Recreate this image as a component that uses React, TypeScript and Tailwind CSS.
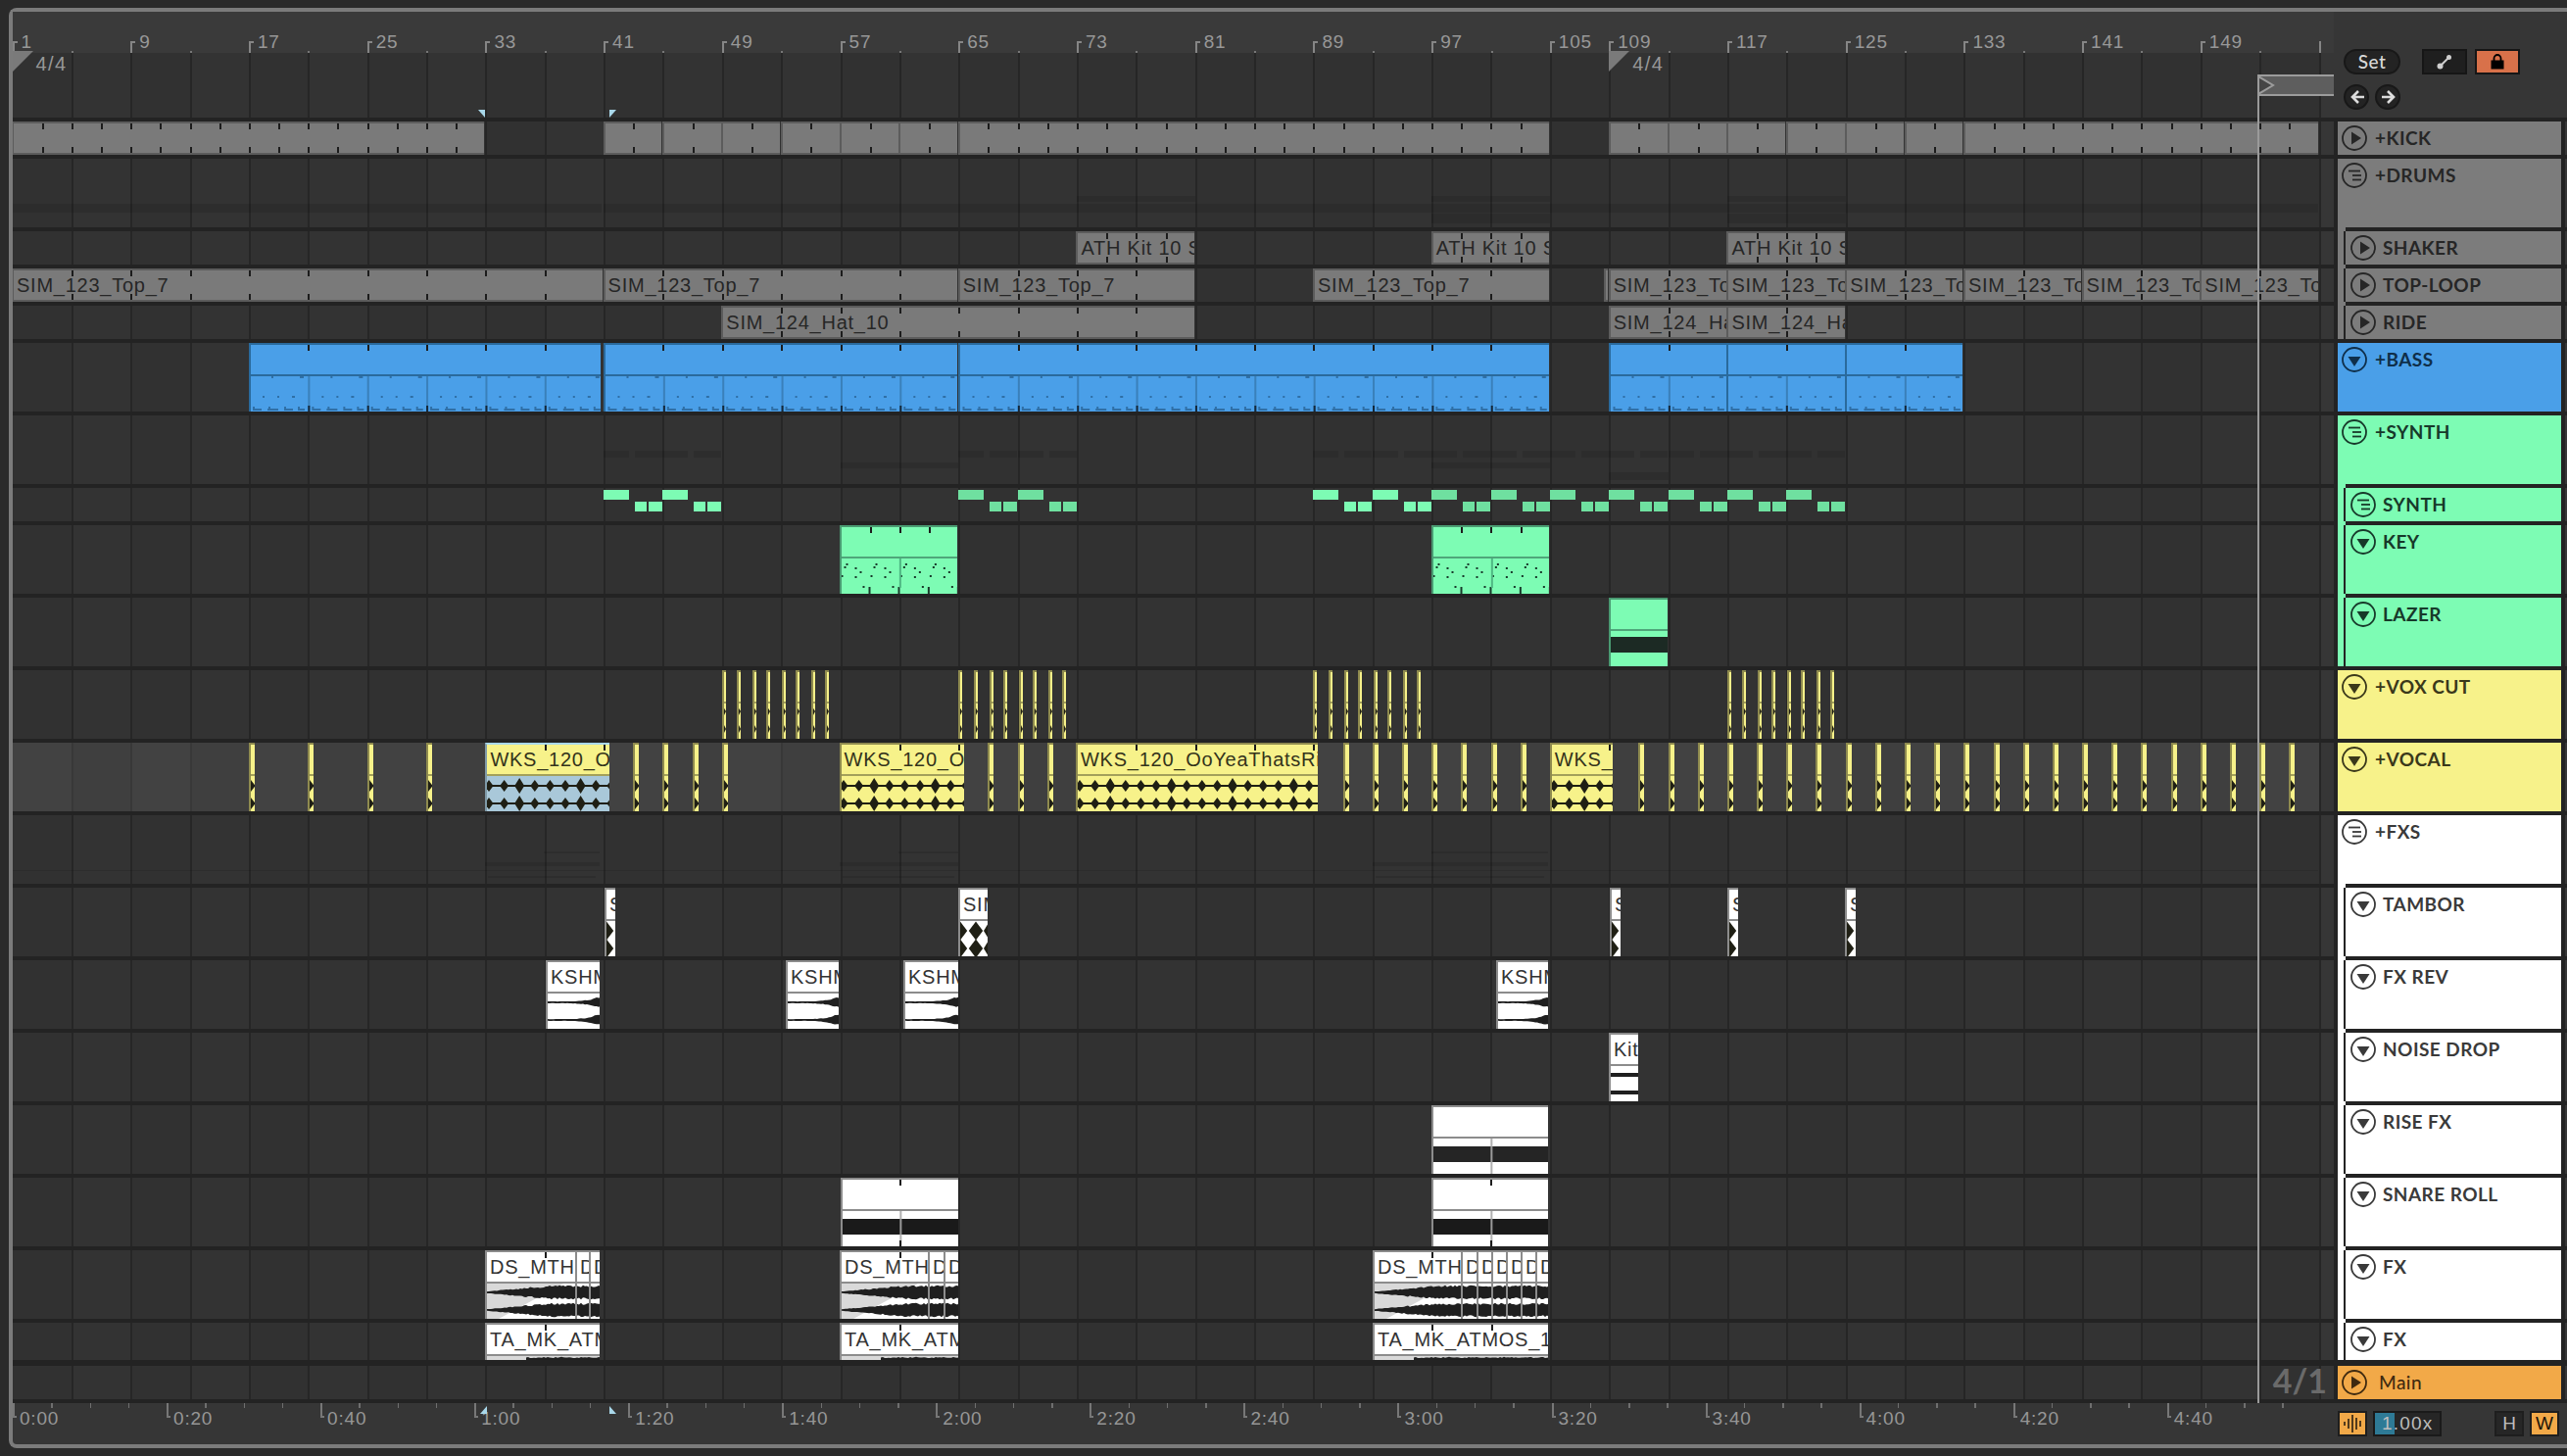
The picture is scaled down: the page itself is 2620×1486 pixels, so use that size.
import React from "react";

const b = (bar: number) => 12.5 + (bar - 1) * 15.09;
const LX = 13;
const P4 = 15.09 * 4;

type ThemeKey = "gray" | "blue" | "green" | "yellow" | "white" | "orange";
const T: Record<ThemeKey, { bg: string; border: string; line: string; text: string; head: string; headText: string; stripe: string }> = {
  gray: { bg: "bg-[#7a7a7a]", border: "border-[#5c5c5c]", line: "bg-[#5c5c5c]", text: "text-[#262626]", head: "bg-[#7c7c7c]", headText: "text-[#262626]", stripe: "bg-[#7c7c7c]" },
  blue: { bg: "bg-[#4a9fe8]", border: "border-[#2a6a9c]", line: "bg-[#2a6a9c]", text: "text-[#10304a]", head: "bg-[#4a9fe8]", headText: "text-[#0f2f4a]", stripe: "bg-[#4a9fe8]" },
  green: { bg: "bg-[#7dfcb4]", border: "border-[#4a9a72]", line: "bg-[#4fa67a]", text: "text-[#123a2a]", head: "bg-[#7dfcb4]", headText: "text-[#17392a]", stripe: "bg-[#7dfcb4]" },
  yellow: { bg: "bg-[#f7f28a]", border: "border-[#8f8b4f]", line: "bg-[#a3a05a]", text: "text-[#33331a]", head: "bg-[#f7f28a]", headText: "text-[#3a381a]", stripe: "bg-[#f7f28a]" },
  white: { bg: "bg-white", border: "border-[#8c8c8c]", line: "bg-[#8c8c8c]", text: "text-[#333333]", head: "bg-white", headText: "text-[#3a3a3a]", stripe: "bg-white" },
  orange: { bg: "bg-[#f2a948]", border: "border-[#8c6a30]", line: "bg-[#8c6a30]", text: "text-[#3f2a10]", head: "bg-[#f2a948]", headText: "text-[#3f2a10]", stripe: "bg-[#f2a948]" },
};

type ClipDef = {
  x1: number;
  x2: number;
  t?: string;
  kind?: string;
  tick?: number;
  tickB?: boolean;
  sel?: boolean;
};

const noise = (x: number, s = 0) => Math.abs(Math.sin(x * 12.9898 + s) * 43758.5453) % 1;

function wavePoints(w: number, cy: number, env: (x: number) => number, seed: number) {
  const top: string[] = [];
  const bot: string[] = [];
  for (let x = 0; x <= w + 2; x += 2) {
    const e = env(x);
    const n = 0.75 + 0.3 * noise(x, seed);
    top.push(`${x},${(cy - e * n).toFixed(1)}`);
    bot.unshift(`${x},${(cy + e * (0.75 + 0.3 * noise(x, seed + 3))).toFixed(1)}`);
  }
  return [...top, ...bot].join(" ");
}

function Diamonds({ w, cy, start = 2, pitch = 15.6, scale = 1, line = true }: { w: number; cy: number; start?: number; pitch?: number; scale?: number; line?: boolean }) {
  const out: React.ReactNode[] = [];
  for (let i = 0, x = start; x < w + 8 * scale; i++, x += pitch) {
    const rx = (i % 4 === 2 ? 5 : 4.5) * scale;
    const ry = (i % 4 === 2 ? 8 : 6) * scale;
    out.push(<polygon key={i} points={`${x - rx},${cy} ${x},${cy - ry} ${x + rx},${cy} ${x},${cy + ry}`} fill="#1f1f14" />);
  }
  return (
    <>
      {line && <rect x={0} y={cy - 1} width={w} height={2} fill="#1f1f14" />}
      {out}
    </>
  );
}

function Content({ c }: { c: ClipDef }) {
  const w = c.x2 - c.x1;
  const cells: number[] = [];
  for (let bar = 1; bar <= 157; bar += 4) {
    const s = b(bar) - c.x1 - 2;
    if (s > -P4 && s < w) cells.push(s);
  }
  switch (c.kind) {
    case "midi":
      return (
        <svg width={w} height={36} className="absolute inset-0">
          {cells.map((s, i) => (
            <g key={i} fill="#2f6fa6">
              <rect x={s + 23} y={0} width={2} height={2} />
              <rect x={s + 52} y={0} width={4} height={2} />
              <rect x={s + 14} y={20} width={2} height={2} />
              <rect x={s + 29} y={20} width={2} height={2} />
              <rect x={s + 44} y={20} width={3} height={2} />
              <rect x={s + 4} y={33} width={9} height={2} />
              <rect x={s + 4} y={31} width={2} height={2} />
              <rect x={s + 19} y={33} width={11} height={2} />
              <rect x={s + 20} y={31} width={2} height={2} />
              <rect x={s + 36} y={33} width={9} height={2} />
              <rect x={s + 36} y={31} width={2} height={2} />
              <rect x={s + 50} y={33} width={7} height={2} />
              <rect x={s + 50} y={31} width={2} height={2} />
              {s > 1 && <rect x={s} y={0} width={2} height={36} fill="#3a80ba" />}
              {s > 1 && <rect x={s} y={30} width={2} height={6} fill="#14283a" />}
            </g>
          ))}
        </svg>
      );
    case "key":
      return (
        <svg width={w} height={36} className="absolute inset-0">
          {cells.map((s, i) => (
            <g key={i} fill="#183a2a">
              {[0, 30].map((g) => (
                <g key={g}>
                  <rect x={s + g + 6} y={5} width={2} height={2} />
                  <rect x={s + g + 4} y={8} width={2} height={2} />
                  <rect x={s + g + 1} y={17} width={2} height={2} />
                  <rect x={s + g + 15} y={9} width={2} height={2} />
                  <rect x={s + g + 20} y={13} width={2} height={2} />
                  <rect x={s + g + 15} y={18} width={2} height={2} />
                </g>
              ))}
              <rect x={s + 23} y={28} width={2} height={2} />
              <rect x={s + 53} y={28} width={2} height={2} />
              {s > 1 && <rect x={s} y={0} width={2} height={30} fill="#4fb884" />}
              <rect x={s + 29} y={29} width={2} height={7} />
              <rect x={s + 59} y={29} width={2} height={7} />
            </g>
          ))}
        </svg>
      );
    case "dia":
      return (
        <svg width={w} height={36} className="absolute inset-0">
          <Diamonds w={w} cy={10} start={w < 10 ? 0 : 2} />
          <Diamonds w={w} cy={28} start={w < 10 ? 0 : 2} />
        </svg>
      );
    case "vox":
      return (
        <svg width={w} height={36} className="absolute inset-0">
          <polygon points="-1,3 2,8 -1,14" fill="#1f1f14" />
          <polygon points="-1,20 2,26 -1,32" fill="#1f1f14" />
        </svg>
      );
    case "tamb":
      return (
        <svg width={w} height={36} className="absolute inset-0">
          <Diamonds w={w} cy={10} start={0} pitch={16} scale={1.6} line={false} />
          <Diamonds w={w} cy={28} start={0} pitch={16} scale={1.6} line={false} />
        </svg>
      );
    case "kshm": {
      const env = (x: number) => 1 + 4 * Math.pow(Math.min(1, x / (w - 6)), 5);
      return (
        <svg width={w} height={36} className="absolute inset-0">
          <polygon points={wavePoints(w, 9, env, 1)} fill="#1f1f1f" />
          <polygon points={wavePoints(w, 27, env, 2)} fill="#1f1f1f" />
        </svg>
      );
    }
    case "kit":
      return (
        <svg width={w} height={36} className="absolute inset-0">
          <rect x={0} y={7} width={w} height={4} fill="#1f1f1f" />
          <rect x={0} y={25} width={w} height={4} fill="#1f1f1f" />
        </svg>
      );
    case "rise":
    case "snare":
      return (
        <svg width={w} height={36} className="absolute inset-0">
          <rect x={0} y={8} width={w} height={16} fill={c.kind === "rise" ? "#252525" : "#1a1a1a"} />
          {cells.map((s, i) => (s > 1 ? <rect key={i} x={s} y={0} width={2} height={36} fill="#a8a8a8" opacity={0.9} /> : null))}
        </svg>
      );
    case "lazer":
      return (
        <svg width={w} height={36} className="absolute inset-0">
          <rect x={0} y={6} width={w} height={16} fill="#1c2a24" />
        </svg>
      );
    case "ds":
    case "ds2": {
      const ramp = c.kind === "ds";
      const env = (x: number) => (ramp ? 1 + 6 * Math.min(1, x / 64) : 7);
      return (
        <svg width={w} height={36} className="absolute inset-0">
          {ramp && <polygon points="0,0 78,0 12,36 0,36" fill="#d9d9d9" />}
          <polygon points={wavePoints(w, 9, env, 4 + c.x1)} fill="#1f1f1f" />
          <polygon points={wavePoints(w, 27, env, 7 + c.x1)} fill="#1f1f1f" />
        </svg>
      );
    }
    case "ta":
      return (
        <svg width={w} height={4} className="absolute inset-0">
          <rect x={0} y={0} width={w} height={4} fill="#d9d9d9" />
          <polygon points={wavePoints(w, 5, (x) => (x < 40 ? 0 : 4), 9)} fill="#1f1f1f" />
          <rect x={0} y={0} width={40} height={4} fill="#d9d9d9" />
        </svg>
      );
    default:
      return null;
  }
}

function Clip({ c, th, short }: { c: ClipDef; th: ThemeKey; short: boolean }) {
  const t = T[th];
  const ticks: number[] = [];
  if (c.tick) {
    for (let bar = 1; bar <= 160; bar += c.tick) {
      const x = b(bar);
      if (x > c.x1 + 3 && x < c.x2 - 3) ticks.push(x - c.x1 - 2);
    }
  }
  return (
    <div
      className={`absolute inset-y-0 flex flex-col overflow-hidden border-l-2 border-t-2 ${t.bg} ${c.sel ? "border-t-[#a9d8ea] border-l-[#7f9aa8]" : t.border}`}
      style={{ left: c.x1 - LX, width: c.x2 - c.x1 }}
    >
      <div className={`h-[30px] shrink-0 overflow-hidden whitespace-nowrap pl-[3px] text-[20px] leading-[30px] tracking-[0.75px] ${t.text}`}>{c.t ?? ""}</div>
      <div className={`h-[2px] shrink-0 ${t.line}`} />
      {!short && (
        <div className={`relative flex-1 overflow-hidden ${c.sel ? "bg-[#a9c8d9]" : ""}`}>
          <Content c={c} />
        </div>
      )}
      {ticks.map((x, i) => (
        <React.Fragment key={i}>
          <span className="absolute top-0 h-[6px] w-[2px] bg-[#1c1c1c]" style={{ left: x }} />
          {c.tickB && <span className={`absolute h-[6px] w-[2px] bg-[#1c1c1c] ${short ? "bottom-[2px]" : "bottom-0"}`} style={{ left: x }} />}
        </React.Fragment>
      ))}
    </div>
  );
}

function Grid({ vocal, end = 2 }: { vocal?: boolean; end?: number }) {
  const cells = Array.from({ length: 39 }, (_, i) => i);
  return (
    <div className="absolute inset-0 ml-[-0.5px] flex">
      {cells.map((i) => (
        <div
          key={i}
          className={`h-full w-[60.36px] shrink-0 ${i === 0 ? "" : "border-l-2"} ${vocal ? "border-[#383838]" : "border-[#262626]"} ${
            vocal ? (i % 2 ? "bg-[#3f3f3f]" : "bg-[#424242]") : i % 2 ? "bg-[#333333]" : "bg-[#313131]"
          }`}
        />
      ))}
      <div className={`h-full flex-1 border-l-2 border-[#262626] bg-[#333333]`} style={{ marginRight: end }} />
    </div>
  );
}

function Faint({ x1, x2, y, h, dark }: { x1: number; x2: number; y: number; h: number; dark?: boolean }) {
  return <div className={`absolute ${dark ? "bg-black/20" : "bg-black/10"}`} style={{ left: x1 - LX, width: x2 - x1, top: y, height: h }} />;
}

const range = (from: number, to: number, step: number) => {
  const out: number[] = [];
  for (let i = from; i < to; i += step) out.push(i);
  return out;
};

const cb = (a: number, z: number, rest: Partial<ClipDef> = {}): ClipDef => ({ x1: b(a) - 0.5, x2: b(z) - 1, ...rest });
const gt = { tick: 4, tickB: true };

const clips: Record<string, ClipDef[]> = {
  kick: [
    cb(1, 33, { tick: 2, tickB: true }),
    ...range(41, 65, 4).map((a) => cb(a, a + 4, { tick: 2, tickB: true })),
    cb(65, 105, { tick: 2, tickB: true }),
    ...range(109, 133, 4).map((a) => cb(a, a + 4, { tick: 2, tickB: true })),
    cb(133, 157, { tick: 2, tickB: true }),
  ],
  shaker: [73, 97, 117].map((a) => cb(a, a + 8, { t: "ATH Kit 10 S", tick: 2, tickB: true })),
  top: [
    cb(1, 41, { t: "SIM_123_Top_7", ...gt }),
    cb(41, 65, { t: "SIM_123_Top_7", ...gt }),
    cb(65, 81, { t: "SIM_123_Top_7", ...gt }),
    cb(89, 105, { t: "SIM_123_Top_7", ...gt }),
    { x1: 1637, x2: 1641 },
    ...[109, 117, 125, 133, 141, 149].map((a) => cb(a, a + 8, { t: "SIM_123_To", ...gt })),
  ],
  ride: [
    cb(49, 81, { t: "SIM_124_Hat_10", ...gt }),
    cb(109, 117, { t: "SIM_124_Ha", ...gt }),
    cb(117, 125, { t: "SIM_124_Ha", ...gt }),
  ],
  bass: [
    { x1: b(17), x2: 613, kind: "midi", tick: 4 },
    cb(41, 65, { kind: "midi", tick: 4 }),
    cb(65, 105, { kind: "midi", tick: 4 }),
    cb(109, 117, { kind: "midi", tick: 4 }),
    cb(117, 125, { kind: "midi", tick: 4 }),
    cb(125, 133, { kind: "midi", tick: 4 }),
  ],
  key: [cb(57, 65, { kind: "key", tick: 2 }), cb(97, 105, { kind: "key", tick: 2 })],
  lazer: [cb(109, 113, { kind: "lazer" })],
  vox: [49, 65, 89, 117].flatMap((a) =>
    [0, 15.5, 31.5, 45.5, 61.5, 75.5, 91.5, 105.5].map((o) => ({ x1: b(a) + o, x2: b(a) + o + 4, kind: "vox" }))
  ),
  vocal: [
    ...[17, 21, 25, 29, 43, 45, 47, 49, 67, 69, 71, ...range(91, 105, 2), ...range(111, 157, 2)].map((a) => ({ x1: b(a), x2: b(a) + 6, kind: "dia" })),
    { x1: b(33), x2: 622, t: "WKS_120_Oo", kind: "dia", sel: true, tick: 4 },
    { x1: b(57) - 1, x2: 984, t: "WKS_120_O", kind: "dia", tick: 4 },
    { x1: b(73) - 1, x2: 1345, t: "WKS_120_OoYeaThatsRi", kind: "dia", tick: 4 },
    { x1: b(105), x2: 1646, t: "WKS_", kind: "dia", tick: 4 },
  ],
  tambor: [
    { x1: 617, x2: 628, t: "S", kind: "tamb" },
    { x1: 978, x2: 1008, t: "SIM", kind: "tamb" },
    { x1: 1643, x2: 1654, t: "S", kind: "tamb" },
    { x1: 1763, x2: 1774, t: "S", kind: "tamb" },
    { x1: 1883, x2: 1894, t: "S", kind: "tamb" },
  ],
  fxrev: [
    { x1: 557, x2: 612 },
    { x1: 802, x2: 856 },
    { x1: 922, x2: 978 },
    { x1: 1527, x2: 1580 },
  ].map((c) => ({ ...c, t: "KSHM", kind: "kshm" })),
  noise: [{ x1: 1642, x2: 1672, t: "Kit", kind: "kit" }],
  rise: [{ x1: b(97), x2: 1580, kind: "rise" }],
  snare: [
    { x1: b(57), x2: 978, kind: "snare", tick: 4, tickB: true },
    { x1: b(97), x2: 1580, kind: "snare", tick: 4, tickB: true },
  ],
  fx1: [
    { x1: 495, x2: 587, t: "DS_MTH", kind: "ds", tick: 4 },
    { x1: 587, x2: 601, t: "D", kind: "ds2" },
    { x1: 601, x2: 612, t: "D", kind: "ds2" },
    { x1: 857, x2: 947, t: "DS_MTH", kind: "ds", tick: 4 },
    { x1: 947, x2: 963, t: "D", kind: "ds2" },
    { x1: 963, x2: 978, t: "D", kind: "ds2" },
    { x1: 1401, x2: 1491, t: "DS_MTH", kind: "ds", tick: 4 },
    ...[1491, 1507, 1522, 1537, 1552, 1567].map((x, i, a) => ({ x1: x, x2: a[i + 1] ?? 1580, t: "D", kind: "ds2" })),
  ],
  fx2: [
    { x1: 495, x2: 612, t: "TA_MK_ATM", kind: "ta", tick: 4 },
    { x1: 857, x2: 978, t: "TA_MK_ATM", kind: "ta", tick: 4 },
    { x1: 1401, x2: 1580, t: "TA_MK_ATMOS_1", kind: "ta", tick: 4 },
  ],
};

function Icon({ type }: { type: string }) {
  return (
    <svg width={26} height={26} viewBox="0 0 26 26" className="shrink-0" fill="currentColor">
      <circle cx={13} cy={13} r={12} fill="none" stroke="currentColor" strokeWidth={1.8} />
      {type === "play" && <polygon points="10,6.5 10,19.5 20,13" />}
      {type === "down" && <polygon points="6.5,10 19.5,10 13,20" />}
      {type === "group" && (
        <g stroke="currentColor" strokeWidth={1.8}>
          <line x1={7} y1={8.5} x2={19} y2={8.5} />
          <line x1={11} y1={13} x2={20} y2={13} />
          <line x1={11} y1={17.5} x2={20} y2={17.5} />
        </g>
      )}
    </svg>
  );
}

type Row = { k: string; name: string; h: number; icon: string; th: ThemeKey; nest?: boolean; sep?: number };
const rows: Row[] = [
  { k: "kick", name: "+KICK", h: 34, icon: "play", th: "gray" },
  { k: "drums", name: "+DRUMS", h: 70, icon: "group", th: "gray" },
  { k: "shaker", name: "SHAKER", h: 34, icon: "play", th: "gray", nest: true },
  { k: "top", name: "TOP-LOOP", h: 34, icon: "play", th: "gray", nest: true },
  { k: "ride", name: "RIDE", h: 34, icon: "play", th: "gray", nest: true },
  { k: "bass", name: "+BASS", h: 70, icon: "down", th: "blue" },
  { k: "gsynth", name: "+SYNTH", h: 70, icon: "group", th: "green" },
  { k: "synth", name: "SYNTH", h: 34, icon: "group", th: "green", nest: true },
  { k: "key", name: "KEY", h: 70, icon: "down", th: "green", nest: true },
  { k: "lazer", name: "LAZER", h: 70, icon: "down", th: "green", nest: true },
  { k: "vox", name: "+VOX CUT", h: 70, icon: "down", th: "yellow" },
  { k: "vocal", name: "+VOCAL", h: 70, icon: "down", th: "yellow" },
  { k: "fxs", name: "+FXS", h: 70, icon: "group", th: "white" },
  { k: "tambor", name: "TAMBOR", h: 70, icon: "down", th: "white", nest: true },
  { k: "fxrev", name: "FX REV", h: 70, icon: "down", th: "white", nest: true },
  { k: "noise", name: "NOISE DROP", h: 70, icon: "down", th: "white", nest: true },
  { k: "rise", name: "RISE FX", h: 70, icon: "down", th: "white", nest: true },
  { k: "snare", name: "SNARE ROLL", h: 70, icon: "down", th: "white", nest: true },
  { k: "fx1", name: "FX", h: 70, icon: "down", th: "white", nest: true },
  { k: "fx2", name: "FX", h: 38, icon: "down", th: "white", nest: true },
  { k: "main", name: "Main", h: 34, icon: "play", th: "orange", sep: 6 },
];

function LaneExtras({ k }: { k: string }) {
  if (k === "drums") {
    return (
      <>
        <Faint x1={13} x2={614} y={46} h={9} />
        <Faint x1={616} x2={2366} y={46} h={9} />
        {[73, 97, 117].map((a) => (
          <Faint key={a} x1={b(a)} x2={b(a + 8)} y={38} h={6} />
        ))}
        {[97, 117].map((a) => (
          <Faint key={a} x1={b(a)} x2={b(a + 8)} y={56} h={10} />
        ))}
      </>
    );
  }
  if (k === "gsynth") {
    const starts = [41, 45, 65, 69, ...range(89, 125, 4)];
    return (
      <>
        {starts.map((a) => (
          <React.Fragment key={a}>
            <Faint x1={b(a)} x2={b(a) + 26} y={36} h={7} />
            <Faint x1={b(a) + 32} x2={b(a) + 60} y={36} h={7} />
          </React.Fragment>
        ))}
        <Faint x1={b(57)} x2={b(65)} y={48} h={6} />
        <Faint x1={b(97)} x2={b(105)} y={48} h={6} />
        <Faint x1={b(109)} x2={b(113)} y={58} h={8} />
      </>
    );
  }
  if (k === "synth") {
    const starts = [41, 45, 65, 69, ...range(89, 125, 4)];
    return (
      <>
        {starts.map((a) => {
          const dim = (a >= 65 && a < 73) || a >= 97;
          const c = dim ? "bg-[#6fe0a0]" : "bg-[#7dfcb4]";
          const s = b(a) - LX;
          return (
            <React.Fragment key={a}>
              <div className={`absolute top-[2px] h-[10px] w-[26px] ${c}`} style={{ left: s }} />
              <div className={`absolute top-[14px] h-[10px] w-[12px] ${c}`} style={{ left: s + 32 }} />
              <div className={`absolute top-[14px] h-[10px] w-[14px] ${c}`} style={{ left: s + 46 }} />
            </React.Fragment>
          );
        })}
      </>
    );
  }
  if (k === "fxs") {
    return (
      <>
        {[
          [495, 612],
          [857, 978],
          [1401, 1580],
        ].map(([a, z]) => (
          <React.Fragment key={a}>
            <Faint x1={a + 60} x2={z} y={37} h={2} />
            <Faint x1={a} x2={z} y={48} h={4} />
            <Faint x1={a + 3} x2={z - 4} y={62} h={2} />
          </React.Fragment>
        ))}
        <Faint x1={13} x2={2366} y={56} h={1} />
      </>
    );
  }
  if (k === "main") {
    return <span className="absolute right-[7px] top-0 text-[34px] font-bold leading-[30px] text-[#6a6a6a] [font-family:Lato,sans-serif]">4/1</span>;
  }
  return null;
}

function TrackRow({ r }: { r: Row }) {
  const t = T[r.th];
  const sepH = r.sep === 6 ? "h-[6px]" : "h-[4px]";
  const rowH = r.h === 34 ? "h-[34px]" : r.h === 38 ? "h-[38px]" : "h-[70px]";
  const list = clips[r.k] ?? [];
  return (
    <>
      <div className={`flex ${sepH} bg-[#232323]`}>
        <div className="w-[2373px] shrink-0" />
        {r.nest && <div className={`w-[8px] ${t.stripe}`} />}
      </div>
      <div className={`flex ${rowH}`}>
        <div className="relative w-[2369px] shrink-0 overflow-hidden">
          <Grid vocal={r.k === "vocal"} end={15} />
          <LaneExtras k={r.k} />
          {list.map((c, i) => (
            <Clip key={i} c={c} th={r.th} short={r.h === 34} />
          ))}
        </div>
        <div className="w-[4px] shrink-0 bg-[#232323]" />
        <div className={`flex w-[228px] shrink-0 ${t.head}`}>
          {r.nest && <div className="h-full w-[8px] shrink-0 border-r-2 border-[#232323]" />}
          <div className={`flex flex-1 items-start pt-[4px] ${r.nest ? "gap-[7px] pl-[5px]" : "gap-[8px] pl-[4px]"} ${t.headText}`}>
            <Icon type={r.icon} />
            <span className={`text-[19px] leading-[26px] tracking-[0.45px] [font-family:Lato,sans-serif] ${r.k === "main" ? "ml-[4px] font-medium tracking-[0.7px]" : "font-bold"}`}>{r.name}</span>
          </div>
        </div>
        <div className="w-[4px] shrink-0 bg-[#232323]" />
      </div>
    </>
  );
}

function TopRuler() {
  const labels = [1, 9, 17, 25, 33, 41, 49, 57, 65, 73, 81, 89, 97, 105, 109, 117, 125, 133, 141, 149];
  const half = range(5, 157, 4).filter((x) => !labels.includes(x));
  return (
    <div className="relative h-[108px] w-[2369px] shrink-0 overflow-hidden">
      <div className="relative h-[42px] bg-[#3a3a3a]">
        {labels.map((n) => (
          <div key={n} className="absolute top-[30px] h-[12px] w-[2px] bg-[#858585]" style={{ left: b(n) - LX }}>
            <div className="absolute left-0 top-0 h-[2px] w-[5px] bg-[#858585]" />
            <span className="absolute left-[9px] top-[-10px] text-[19px] leading-[22px] tracking-[0.8px] text-[#989898]">{n}</span>
          </div>
        ))}
        {half.map((n) => (
          <div key={n} className="absolute bottom-0 h-[2px] w-[2px] bg-[#777777]" style={{ left: b(n) - LX }} />
        ))}
        <div className="absolute bottom-0 h-[12px] w-[2px] bg-[#858585]" style={{ left: b(157) - LX }} />
      </div>
      <div className="relative h-[66px]">
        <Grid end={15} />
        {[b(1), b(109)].map((x) => (
          <div key={x} className="absolute top-0" style={{ left: x - LX }}>
            <svg width={22} height={22} className="absolute left-0 top-[-2px]">
              <polygon points="0,0 21,0 0,21" fill="#7a7a7a" />
            </svg>
            <span className="absolute left-[24px] top-0 whitespace-nowrap text-[20px] leading-[22px] tracking-[1.4px] text-[#989898]">4/4</span>
          </div>
        ))}
        <svg width={8} height={8} className="absolute top-[58px]" style={{ left: 488 - LX }}>
          <polygon points="0,0 7,0 7,8" fill="#a9d8ea" />
        </svg>
        <svg width={8} height={8} className="absolute top-[58px]" style={{ left: 622 - LX }}>
          <polygon points="0,0 7,0 0,8" fill="#a9d8ea" />
        </svg>
      </div>
    </div>
  );
}

function Controls() {
  return (
    <div className="flex flex-col gap-[10px] pl-[10px] pt-[38px]">
      <div className="flex items-center">
        <div className="flex h-[26px] w-[58px] items-center justify-center rounded-full border-2 border-[#181818] bg-[#232323] text-[19px] font-medium tracking-[0.5px] text-[#d8d8d8] [font-family:Lato,sans-serif]">Set</div>
        <div className="ml-[22px] flex h-[26px] w-[46px] items-center justify-center border-2 border-[#161616] bg-[#1f1f1f]">
          <svg width={16} height={16} viewBox="0 0 16 16">
            <line x1={3} y1={13} x2={13} y2={3} stroke="#cfcfcf" strokeWidth={2} />
            <circle cx={3.5} cy={12.5} r={3} fill="#cfcfcf" />
            <circle cx={12.5} cy={3.5} r={2.5} fill="#cfcfcf" />
          </svg>
        </div>
        <div className="ml-[8px] flex h-[26px] w-[46px] items-center justify-center border-2 border-[#161616] bg-[#d8714a]">
          <svg width={16} height={16} viewBox="0 0 16 16">
            <path d="M4.5 7V4.5a3.5 3.5 0 0 1 7 0V7" fill="none" stroke="#000" strokeWidth={1.8} />
            <rect x={1.5} y={6.5} width={13} height={9} fill="#000" />
          </svg>
        </div>
      </div>
      <div className="flex gap-[6px]">
        {["M11 3 L5 9 L11 15 M5.5 9 H17", "M9 3 L15 9 L9 15 M14.5 9 H3"].map((d) => (
          <div key={d} className="flex h-[26px] w-[26px] items-center justify-center rounded-full border-2 border-[#181818] bg-[#232323]">
            <svg width={18} height={18} viewBox="0 0 18 18">
              <path d={d} fill="none" stroke="#dcdcdc" strokeWidth={2.6} />
            </svg>
          </div>
        ))}
      </div>
    </div>
  );
}

function BottomRuler() {
  const majors = range(0, 15, 1);
  const minors = range(0, 60, 1).filter((i) => i % 4 !== 0);
  const P = 157.05;
  return (
    <div className="flex h-[42px] shrink-0">
      <div className="relative h-full w-[2369px] shrink-0 overflow-hidden">
        {minors.map((i) => (
          <div key={i} className="absolute top-0 h-[5px] w-[1.5px] bg-[#6f6f6f]" style={{ left: (i * P) / 4 }} />
        ))}
        {majors.map((i) => (
          <div key={i} className="absolute top-0 h-[15px] w-[2px] bg-[#777777]" style={{ left: i * P }}>
            <div className="absolute bottom-0 left-0 h-[2px] w-[4px] bg-[#777777]" />
            <span className="absolute left-[7px] top-[4px] text-[19px] leading-[24px] tracking-[0.8px] whitespace-nowrap text-[#969696]">{`${Math.floor((i * 20) / 60)}:${String((i * 20) % 60).padStart(2, "0")}`}</span>
          </div>
        ))}
        <svg width={8} height={8} className="absolute top-[3px]" style={{ left: 490 - LX }}>
          <polygon points="0,8 7,8 7,0" fill="#a9d8ea" />
        </svg>
        <svg width={8} height={8} className="absolute top-[3px]" style={{ left: 622 - LX }}>
          <polygon points="0,0 0,8 7,8" fill="#a9d8ea" />
        </svg>
      </div>
      <div className="flex flex-1 items-start pl-[4px] pt-[8px]">
        <div className="flex h-[26px] w-[30px] items-center justify-center border-2 border-[#1e1e1e] bg-[#f2a948]">
          <svg width={20} height={20} viewBox="0 0 20 20" stroke="#2a2012" strokeWidth={1.6}>
            <line x1={2} y1={8} x2={2} y2={12} />
            <line x1={6} y1={5} x2={6} y2={15} />
            <line x1={10} y1={1} x2={10} y2={19} />
            <line x1={14} y1={4} x2={14} y2={16} />
            <line x1={18} y1={7} x2={18} y2={13} />
          </svg>
        </div>
        <div className="relative ml-[6px] h-[26px] w-[70px] border-2 border-[#1a1a1a] bg-[#262626]">
          <div className="absolute inset-y-0 left-0 w-[20px] bg-[#2e7a96]" />
          <span className="absolute left-[7px] top-0 text-[19px] leading-[22px] tracking-[1.2px] text-[#bdbdbd]">1.00x</span>
        </div>
        <div className="ml-[54px] flex h-[26px] w-[30px] items-center justify-center border-2 border-[#1e1e1e] bg-[#262626] text-[19px] text-[#bdbdbd]">H</div>
        <div className="ml-[6px] flex h-[26px] w-[30px] items-center justify-center border-2 border-[#1e1e1e] bg-[#f2a948] text-[19px] text-[#1c1408]">W</div>
      </div>
    </div>
  );
}

export default function App() {
  return (
    <div className="h-[1486px] w-[2620px] overflow-hidden bg-[#2a2a2a] py-[8px] pl-[9px] [font-family:'Liberation_Sans',sans-serif]">
      <div className="relative flex h-full flex-col rounded-l-lg border-y-4 border-l-4 border-[#7b7b7b] bg-[#363636]">
        <div className="flex h-[108px] shrink-0">
          <TopRuler />
          <Controls />
        </div>
        {rows.map((r) => (
          <TrackRow key={r.k} r={r} />
        ))}
        <div className="h-[4px] shrink-0 bg-[#232323]" />
        <BottomRuler />
        {/* end marker over the lanes */}
        <div className="pointer-events-none absolute bottom-[42px] top-[64px] w-[2px] bg-[#9a9a9a]" style={{ left: 2304 - LX }} />
        <div className="pointer-events-none absolute top-[64px] flex h-[22px] w-[77px] items-center border-y-2 border-[#9c9c9c] bg-[#5e5e5e]" style={{ left: 2305 - LX }}>
          <svg width={18} height={18} viewBox="0 0 18 18" className="shrink-0">
            <polygon points="0,0 15,9 0,18" fill="#454545" stroke="#9c9c9c" strokeWidth={2} />
          </svg>
        </div>
      </div>
    </div>
  );
}
